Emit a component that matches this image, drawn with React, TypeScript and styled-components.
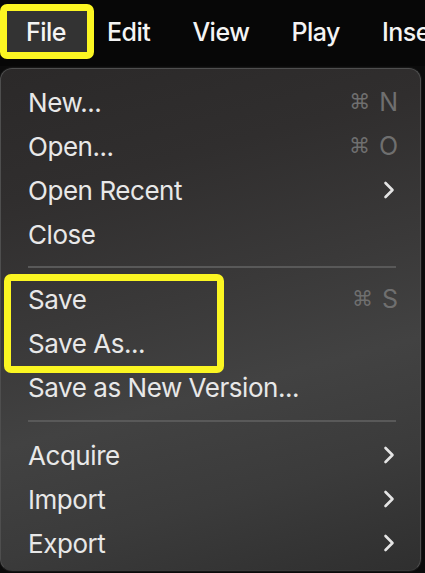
import React from 'react';
import styled, { createGlobalStyle } from 'styled-components';

type TItem =
  | { kind: 'item'; label: string; shortcut?: string; submenu?: boolean }
  | { kind: 'sep' };

const GlobalStyle = createGlobalStyle`
  html, body {
    margin: 0;
    padding: 0;
    background: #0b0b0b;
    width: 425px;
    height: 573px;
    overflow: hidden;
  }
  *, *::before, *::after {
    box-sizing: border-box;
  }
`;

const aMenuBar = ['File', 'Edit', 'View', 'Play', 'Insert'];

const aTop: TItem[] = [
  { kind: 'item', label: 'New...', shortcut: 'N' },
  { kind: 'item', label: 'Open...', shortcut: 'O' },
  { kind: 'item', label: 'Open Recent', submenu: true },
  { kind: 'item', label: 'Close' },
];

const aBottom: TItem[] = [
  { kind: 'item', label: 'Acquire', submenu: true },
  { kind: 'item', label: 'Import', submenu: true },
  { kind: 'item', label: 'Export', submenu: true },
];

const Chevron = () => (
  <svg width='12' height='18' viewBox='0 0 12 18'>
    <polyline
      points='2.5,2 9.5,9 2.5,16'
      fill='none'
      stroke='#e4e4e4'
      strokeWidth='2.6'
      strokeLinecap='round'
      strokeLinejoin='round'
    />
  </svg>
);

const renderItem = (oItem: TItem, i: number) => {
  if (oItem.kind === 'sep') {
    return <Separator key={'sep' + i} />;
  }
  return (
    <Row key={oItem.label}>
      <Label>{oItem.label}</Label>
      {oItem.shortcut && (
        <Shortcut>
          <Cmd>⌘</Cmd>
          {oItem.shortcut}
        </Shortcut>
      )}
      {oItem.submenu && (
        <Arrow>
          <Chevron />
        </Arrow>
      )}
    </Row>
  );
};

const App = () => {
  return (
    <>
      <GlobalStyle />
      <Screen>
        <MenuBar>
          {aMenuBar.map((sName, i) => (
            <BarItem key={sName} active={i === 0}>
              {sName}
            </BarItem>
          ))}
        </MenuBar>

        <Panel>
          {aTop.map(renderItem)}
          <Separator />
          <Marked>
            {renderItem({ kind: 'item', label: 'Save', shortcut: 'S' }, 0)}
            {renderItem({ kind: 'item', label: 'Save As...' }, 1)}
          </Marked>
          {renderItem({ kind: 'item', label: 'Save as New Version...' }, 2)}
          <Separator wide />
          {aBottom.map(renderItem)}
        </Panel>
      </Screen>
    </>
  );
};

const Screen = styled.div`
  width: 425px;
  height: 573px;
  display: flex;
  flex-direction: column;
  font-family: Inter, 'Noto Sans', 'DejaVu Sans', sans-serif;
  overflow: hidden;
`;

const MenuBar = styled.div`
  height: 68px;
  padding-top: 4px;
  display: flex;
  align-items: flex-start;
  background: #070707;
  white-space: nowrap;
`;

const BarItem = styled.div<{ active?: boolean }>`
  height: 55px;
  display: flex;
  align-items: center;
  padding: 0 21px;
  font-size: 25px;
  font-weight: 500;
  letter-spacing: -0.5px;
  color: #f4f4f4;

  ${(p) =>
    p.active &&
    `
    padding: 0 21px 0 19px;
    margin-right: -8px;
    border: 7px solid #fbf622;
    border-radius: 7px;
    background: #333333;
  `}
`;

const Panel = styled.div`
  width: 421px;
  flex: 1;
  margin-top: 2px;
  margin-bottom: 2px;
  padding: 11px 0 5px;
  border-radius: 12px;
  border: 1px solid #4e4e4e;
  border-bottom-color: #3a3a3a;
  box-shadow: 0 0 0 1px #161616;
  background: linear-gradient(
    165deg,
    #2b2929 0%,
    #302e2e 22%,
    #3a3939 45%,
    #424242 62%,
    #3b3b3b 80%,
    #2f2f2f 100%
  );
  display: flex;
  flex-direction: column;
`;

const Row = styled.div`
  height: 44px;
  display: flex;
  align-items: center;
  padding: 0 22px 0 27px;
  font-size: 26px;
  color: #e8e8e8;
`;

const Label = styled.span`
  flex: 1;
  letter-spacing: -0.45px;
`;

const Shortcut = styled.span`
  display: flex;
  align-items: center;
  color: #6f6f6f;
  font-size: 25px;
`;

const Cmd = styled.span`
  font-family: 'DejaVu Sans', sans-serif;
  font-size: 21px;
  margin-right: 9px;
`;

const Arrow = styled.span`
  display: flex;
  margin-right: 3px;
`;

const Separator = styled.div<{ wide?: boolean }>`
  height: ${(p) => (p.wide ? 24 : 21)}px;
  margin: 0 24px 0 27px;
  display: flex;
  align-items: center;

  &::before {
    content: '';
    flex: 1;
    height: 2px;
    background: #595959;
  }
`;

const Marked = styled.div`
  position: relative;

  &::after {
    content: '';
    position: absolute;
    left: 3px;
    top: -3px;
    width: 220px;
    bottom: -8px;
    border: 7px solid #fbf622;
    border-radius: 7px;
    pointer-events: none;
  }
`;

export default App;
